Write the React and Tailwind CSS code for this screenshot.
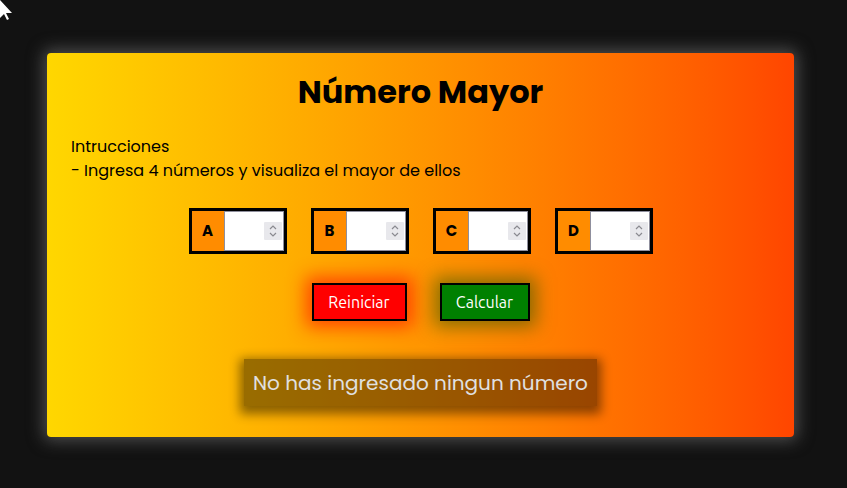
import React from "react";

const font = { fontFamily: '"Poppins", "Inter", "Noto Sans", sans-serif' };

function Spinner() {
  return (
    <div className="w-[18px] h-[18px] bg-[#e8e8ec] flex flex-col items-center justify-center rounded-[1px]">
      <svg width="10" height="14" viewBox="0 0 10 14" fill="none" stroke="#8a8a90" strokeWidth="1.2">
        <path d="M2 5 L5 2 L8 5" />
        <path d="M2 9 L5 12 L8 9" />
      </svg>
    </div>
  );
}

function NumInput({ label }) {
  return (
    <div className="flex border-[3px] border-black h-[46px] w-[98px]">
      <div className="w-[32px] bg-[#ff8c00] flex items-center justify-center font-bold text-[15px] text-black">
        {label}
      </div>
      <div className="flex-1 bg-white border border-[#8f8f9d] flex items-center justify-end pr-[1px]">
        <Spinner />
      </div>
    </div>
  );
}

export default function App() {
  return (
    <div className="min-h-screen bg-[#121212] relative" style={font}>
      <svg className="absolute left-0 top-0" width="16" height="20" viewBox="0 0 16 20">
        <path d="M0 0 L0 18 L4 14 L7 20 L9 19 L6 13 L12 13 Z" fill="white" />
      </svg>
      <div className="pt-[53px] pl-[47px] pr-[53px] pb-[51px]">
        <div className="h-[384px] rounded bg-gradient-to-r from-[#ffd700] to-[#ff4500] shadow-[0_0_16px_4px_rgba(90,90,90,0.8)] px-6 pt-[15px]">
          <h1 className="text-center text-[32px] font-bold leading-[48px] text-black">Número Mayor</h1>
          <div className="mt-[19px] text-[16px] leading-6 text-black">
            <p>Intrucciones</p>
            <p>- Ingresa 4 números y visualiza el mayor de ellos</p>
          </div>
          <div className="flex justify-center gap-[24px] mt-[25px]">
            <NumInput label="A" />
            <NumInput label="B" />
            <NumInput label="C" />
            <NumInput label="D" />
          </div>
          <div
            className="flex justify-center gap-[33px] mt-[29px]"
            style={{ fontFamily: '"Ubuntu", "Open Sans", "DejaVu Sans", sans-serif' }}
          >
            <button className="w-[95px] h-[38px] bg-[#ff0000] border-2 border-black text-white text-[16px] shadow-[0_0_18px_6px_rgba(255,30,0,0.7)]">
              Reiniciar
            </button>
            <button className="w-[90px] h-[38px] bg-[#008000] border-2 border-black text-white text-[16px] shadow-[0_0_18px_6px_rgba(60,90,0,0.6)]">
              Calcular
            </button>
          </div>
          <div className="flex justify-center mt-[38px]">
            <div className="w-[353px] h-[47px] bg-black/40 text-[#e0e0e0] text-[20px] flex items-center justify-center shadow-[0_4px_10px_4px_rgba(0,0,0,0.45)]">
              No has ingresado ningun número
            </div>
          </div>
        </div>
      </div>
    </div>
  );
}
